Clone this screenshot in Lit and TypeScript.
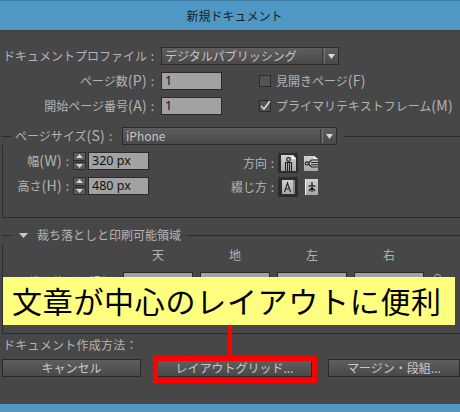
import { LitElement, html, css, svg } from "lit";
import { customElement } from "lit/decorators.js";

const arrow = html`<span class="sep"></span><svg class="caret" width="7" height="5" viewBox="0 0 7 5"><path d="M0 0h7L3.5 5z" fill="#d8d8d8"/></svg>`;

const spinner = html`<span class="spin">
  <span class="spin-b"><svg width="7" height="4" viewBox="0 0 7 4"><path d="M0 4L3.5 0 7 4z" fill="#d4d4d4"/></svg></span>
  <span class="spin-b"><svg width="7" height="4" viewBox="0 0 7 4"><path d="M0 0h7L3.5 4z" fill="#d4d4d4"/></svg></span>
</span>`;

const defs = svg`<defs><linearGradient id="pg" x1="0" y1="0" x2="0" y2="1"><stop offset="0" stop-color="#d0d0d0"/><stop offset="1" stop-color="#a8a8a8"/></linearGradient></defs>`;
const portrait = svg`${defs}<path d="M0 0h12l3 3v13H0z" fill="url(#pg)"/><path d="M11 0l4 4h-4z" fill="#fff"/>
  <circle cx="7.5" cy="4.5" r="1.8" fill="none" stroke="#222" stroke-width="1.2"/>
  <path d="M4.5 16V7.5h6V16M6.5 8v8M8.5 8v8" fill="none" stroke="#222" stroke-width="1.1"/>`;
const landscape = svg`${defs}<path d="M0 0h10l4 3v12H0z" fill="url(#pg)"/><path d="M10 0l4 3h-4z" fill="#fff"/>
  <circle cx="2.8" cy="7.5" r="1.6" fill="none" stroke="#222" stroke-width="1.1"/>
  <path d="M14 4H7.5L5.2 6v3l2.3 2H14M7 6.5h7M7 8.8h7" fill="none" stroke="#222" stroke-width="1.1"/>`;
const bindLeft = svg`${defs}<path d="M0 0h11v14H0z" fill="url(#pg)"/><path d="M12 0v14" stroke="#ddd"/>
  <path d="M2.5 12L5.5 3l3 9M3.6 9h3.8" fill="none" stroke="#222" stroke-width="1.1"/>`;
const bindRight = svg`${defs}<path d="M1 0h12v16H1z" fill="url(#pg)"/><path d="M.5 0v16" stroke="#eee"/>
  <path d="M7 3v10M3.5 7.5L7 6l3.500 1.500M4 12l3-3.500 3 3.500" fill="none" stroke="#222" stroke-width="1.3"/>`;

@customElement("app-root")
export class AppRoot extends LitElement {
  static styles = css`
    :host { display: block; width: 460px; height: 412px; position: relative; overflow: hidden;
      background: #474747; color: #b4b4b4; font: 12px/18px "Noto Sans CJK JP", "Noto Sans", sans-serif; }
    * { box-sizing: border-box; }
    .lt { font-size: 14px; letter-spacing: .3px; line-height: 1; }
    .title { height: 31px; background: #4f97c4; border-top: 1px solid #3f7da6; border-bottom: 1px solid #3d3d3d;
      color: #1d1d1d; font-size: 12px; display: flex; align-items: center; justify-content: center; padding-left: 9px; }
    .main { padding: 16px 0 0 2px; display: flex; flex-direction: column; }
    .row { display: flex; align-items: center; height: 18px; }
    .lab { width: 159px; flex: none; text-align: right; white-space: nowrap; }
    .colon { display: inline-block; width: 5px; margin: 0 6px 0 3px; text-align: center; }
    .select { height: 18px; display: flex; align-items: center; background: linear-gradient(#5e5e5e, #494949);
      border: 1px solid #2b2b2b; padding: 0 3px; color: #c4c4c4; white-space: nowrap; }
    .select .txt { flex: 1; }
    .sep { width: 3px; height: 14px; border-left: 1px solid #3a3a3a; border-right: 1px solid #777; margin-right: 3px; }
    .input { background: #a2a2a2; border: 1px solid #2a2a2a; color: #111; height: 18px; padding-left: 3px;
      font: 12.500px/16px "Noto Sans", sans-serif; }
    .r2 { margin-top: 7px; }
    .r3 { margin-top: 7px; }
    .sel1 { width: 178px; }
    .in1 { width: 61px; }
    .chk { width: 12px; height: 12px; border: 1px solid #2b2b2b; background: #535353; margin-left: 37px; margin-right: 5px; flex: none; display: flex; }
    .chk svg { display: block; overflow: visible; }
    .nw { white-space: nowrap; }
    .group { display: flex; flex-direction: column; }
    .head { display: flex; align-items: center; height: 18px; }
    .ln { height: 1px; background: #2c2c2c; }
    .ln.s { width: 10px; flex: none; }
    .ln.g { flex: 1; }
    .size { margin-top: 12px; }
    .lab2 { margin-left: 3px; white-space: nowrap; width: 107px; flex: none; }
    .sel2 { width: 215px; margin-right: 6px; flex: none; }
    .gbody { border-left: 1px solid #2c2c2c; border-bottom: 1px solid #2c2c2c; }
    .sbody { height: 73px; padding-top: 7px; display: flex; }
    .dims { width: 146px; flex: none; }
    .dl { width: 67px; flex: none; text-align: right; white-space: nowrap; margin-right: 3px; }
    .dl .colon, .ol .colon { margin-right: 0; }
    .spin { width: 13px; height: 18px; display: flex; flex-direction: column; gap: 1px; margin-right: 2px; flex: none; }
    .spin-b { flex: 1; background: #5a5a5a; border: 1px solid #2e2e2e; display: flex; align-items: center; justify-content: center; }
    .in2 { width: 61px; }
    .orient { display: flex; flex-direction: column; padding-top: 1px; }
    .ol { width: 126px; flex: none; text-align: right; white-space: nowrap; }
    .ico { width: 20px; height: 20px; display: flex; align-items: center; justify-content: center; margin-left: 3px; flex: none; }
    .ico.on { background: #2c2c2c; }
    .orient .row { height: 20px; }
    .orient .row + .row { margin-top: 4px; }
    .bleed { margin-top: 8px; }
    .tri { width: 9px; height: 5px; margin: 0 9px 0 7px; flex: none; }
    .lab3 { white-space: nowrap; margin-right: 6px; }
    .bbody { height: 90px; padding: 2px 0 0 120px; display: flex; flex-direction: column; position: relative; }
    .cols { display: flex; gap: 7px; }
    .cols > * { width: 70px; text-align: center; }
    .cols .input { height: 20px; }
    .cols.v { margin-top: 8px; align-items: flex-start; }
    .blab { position: absolute; left: 25px; top: 29px; white-space: nowrap; }
    .link { position: absolute; left: 431px; top: 30px; width: 7px; height: 10px; border: 1px solid #b0b0b0; border-radius: 3px; }
    .how { margin-top: 2px; padding-left: 1px; height: 20px; letter-spacing: .25px; }
    .btns { display: flex; margin-top: 3px; gap: 16px; }
    .btn { height: 18px; background: linear-gradient(#5f5f5f, #484848); border: 1px solid #2a2a2a; color: #c8c8c8;
      display: flex; align-items: center; justify-content: center; white-space: nowrap; flex: none; }
    .b1 { width: 139px; } .b2 { width: 155px; } .b3 { width: 132px; }
    .foot { position: absolute; left: 0; right: 0; bottom: 0; height: 8px; background: #4f97c4; }
    .banner { position: absolute; left: 3px; top: 277px; width: 452px; height: 48px; background: #ffff7f; color: #000;
      font: 400 30px/47px "Noto Sans CJK JP", sans-serif; letter-spacing: .7px; padding-left: 9px; white-space: nowrap; }
    .redline { position: absolute; left: 228px; top: 325px; width: 4px; height: 32px; background: #f00; }
    .redbox { position: absolute; left: 153px; top: 356px; width: 164px; height: 27px; border: 5px solid #f00; }
  `;

  render() {
    return html`
      <div class="title">新規ドキュメント</div>
      <div class="main">
        <div class="row">
          <div class="lab">ドキュメントプロファイル<span class="colon">:</span></div>
          <div class="select sel1"><span class="txt">デジタルパブリッシング</span>${arrow}</div>
        </div>
        <div class="row r2">
          <div class="lab">ページ数<span class="lt">(P)</span><span class="colon">:</span></div>
          <div class="input in1">1</div>
          <span class="chk"></span><span class="nw">見開きページ<span class="lt">(F)</span></span>
        </div>
        <div class="row r3">
          <div class="lab">開始ページ番号<span class="lt">(A)</span><span class="colon">:</span></div>
          <div class="input in1">1</div>
          <span class="chk"><svg width="10" height="10" viewBox="0 0 10 10"><path d="M1 5l3 3 6-8" fill="none" stroke="#d8d8d8" stroke-width="1.6"/></svg></span><span class="nw">プライマリテキストフレーム<span class="lt">(M)</span></span>
        </div>

        <div class="group size">
          <div class="head">
            <span class="ln s"></span>
            <span class="lab2">ページサイズ<span class="lt">(S)</span><span class="colon">:</span></span>
            <div class="select sel2"><span class="txt">iPhone</span>${arrow}</div>
            <span class="ln g"></span>
          </div>
          <div class="gbody sbody">
            <div class="dims">
              <div class="row"><span class="dl">幅<span class="lt">(W)</span><span class="colon">:</span></span>${spinner}<div class="input in2">320 px</div></div>
              <div class="row r3"><span class="dl">高さ<span class="lt">(H)</span><span class="colon">:</span></span>${spinner}<div class="input in2">480 px</div></div>
            </div>
            <div class="orient">
              <div class="row"><span class="ol">方向<span class="colon">:</span></span>
                <span class="ico on"><svg width="15" height="16" viewBox="0 0 15 16">${portrait}</svg></span>
                <span class="ico"><svg width="14" height="15" viewBox="0 0 14 15">${landscape}</svg></span></div>
              <div class="row"><span class="ol">綴じ方<span class="colon">:</span></span>
                <span class="ico on"><svg width="13" height="14" viewBox="0 0 13 14">${bindLeft}</svg></span>
                <span class="ico"><svg width="13" height="16" viewBox="0 0 13 16">${bindRight}</svg></span></div>
            </div>
          </div>
        </div>

        <div class="group bleed">
          <div class="head">
            <span class="ln s"></span>
            <svg class="tri" viewBox="0 0 9 5"><path d="M0 0h9L4.500 5z" fill="#c8c8c8"/></svg>
            <span class="lab3">裁ち落としと印刷可能領域</span>
            <span class="ln g"></span>
          </div>
          <div class="gbody bbody">
            <div class="cols"><span>天</span><span>地</span><span>左</span><span>右</span></div>
            <div class="cols v"><div class="input"></div><div class="input"></div><div class="input"></div><div class="input"></div></div>
            <span class="blab">裁ち落とし<span class="lt">(B)</span><span class="colon">:</span></span>
            <span class="link"></span>
          </div>
        </div>

        <div class="how">ドキュメント作成方法：</div>
        <div class="btns">
          <div class="btn b1">キャンセル</div>
          <div class="btn b2">レイアウトグリッド...</div>
          <div class="btn b3">マージン・段組...</div>
        </div>
      </div>
      <div class="foot"></div>
      <div class="banner">文章が中心のレイアウトに便利</div>
      <div class="redline"></div>
      <div class="redbox"></div>
    `;
  }
}
